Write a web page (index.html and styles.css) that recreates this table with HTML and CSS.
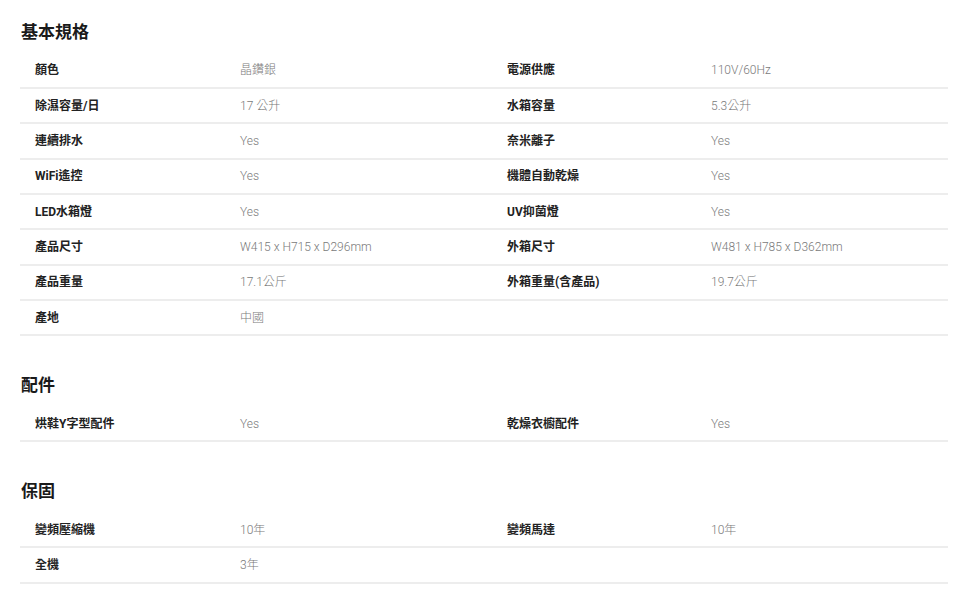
FILE: index.html
```html
<!DOCTYPE html>
<html lang="zh-Hant">
<head>
<meta charset="utf-8">
<title>規格</title>
<link rel="stylesheet" href="styles.css">
</head>
<body>
<div class="page">
  <section class="spec">
    <h2 class="spec-title">基本規格</h2>
    <div class="row"><div class="lbl">顏色</div><div class="val">晶鑽銀</div><div class="lbl">電源供應</div><div class="val">110V/60Hz</div></div>
    <div class="row"><div class="lbl">除濕容量/日</div><div class="val">17 公升</div><div class="lbl">水箱容量</div><div class="val">5.3公升</div></div>
    <div class="row"><div class="lbl">連續排水</div><div class="val">Yes</div><div class="lbl">奈米離子</div><div class="val">Yes</div></div>
    <div class="row"><div class="lbl">WiFi遙控</div><div class="val">Yes</div><div class="lbl">機體自動乾燥</div><div class="val">Yes</div></div>
    <div class="row"><div class="lbl">LED水箱燈</div><div class="val">Yes</div><div class="lbl">UV抑菌燈</div><div class="val">Yes</div></div>
    <div class="row"><div class="lbl">產品尺寸</div><div class="val">W415 x H715 x D296mm</div><div class="lbl">外箱尺寸</div><div class="val">W481 x H785 x D362mm</div></div>
    <div class="row"><div class="lbl">產品重量</div><div class="val">17.1公斤</div><div class="lbl">外箱重量(含產品)</div><div class="val">19.7公斤</div></div>
    <div class="row"><div class="lbl">產地</div><div class="val">中國</div><div class="lbl"></div><div class="val"></div></div>
  </section>
  <section class="spec">
    <h2 class="spec-title">配件</h2>
    <div class="row"><div class="lbl">烘鞋Y字型配件</div><div class="val">Yes</div><div class="lbl">乾燥衣櫥配件</div><div class="val">Yes</div></div>
  </section>
  <section class="spec">
    <h2 class="spec-title">保固</h2>
    <div class="row"><div class="lbl">變頻壓縮機</div><div class="val">10年</div><div class="lbl">變頻馬達</div><div class="val">10年</div></div>
    <div class="row"><div class="lbl">全機</div><div class="val">3年</div><div class="lbl"></div><div class="val"></div></div>
  </section>
</div>
</body>
</html>
```
FILE: styles.css
```css
html, body {
  margin: 0;
  padding: 0;
  background: #fff;
}
body {
  font-family: Roboto, "Noto Sans CJK TC", sans-serif;
  color: #222;
}
.page {
  padding: 20px 12px 0 20px;
}
.spec + .spec {
  margin-top: 37px;
}
.spec-title {
  margin: 0 0 9.7px 1px;
  font-size: 17px;
  line-height: 24px;
  font-weight: 700;
  color: #1a1a1a;
}
.row {
  display: grid;
  grid-template-columns: 205px 267px 204px 1fr;
  align-items: center;
  box-sizing: border-box;
  height: 35.33px;
  padding-left: 15px;
  border-bottom: 2px solid #ededed;
  font-size: 12px;
  line-height: 16px;
}
.lbl {
  font-weight: 700;
  color: #222;
}
.val {
  font-weight: 300;
  color: #7a7a7a;
}
```
